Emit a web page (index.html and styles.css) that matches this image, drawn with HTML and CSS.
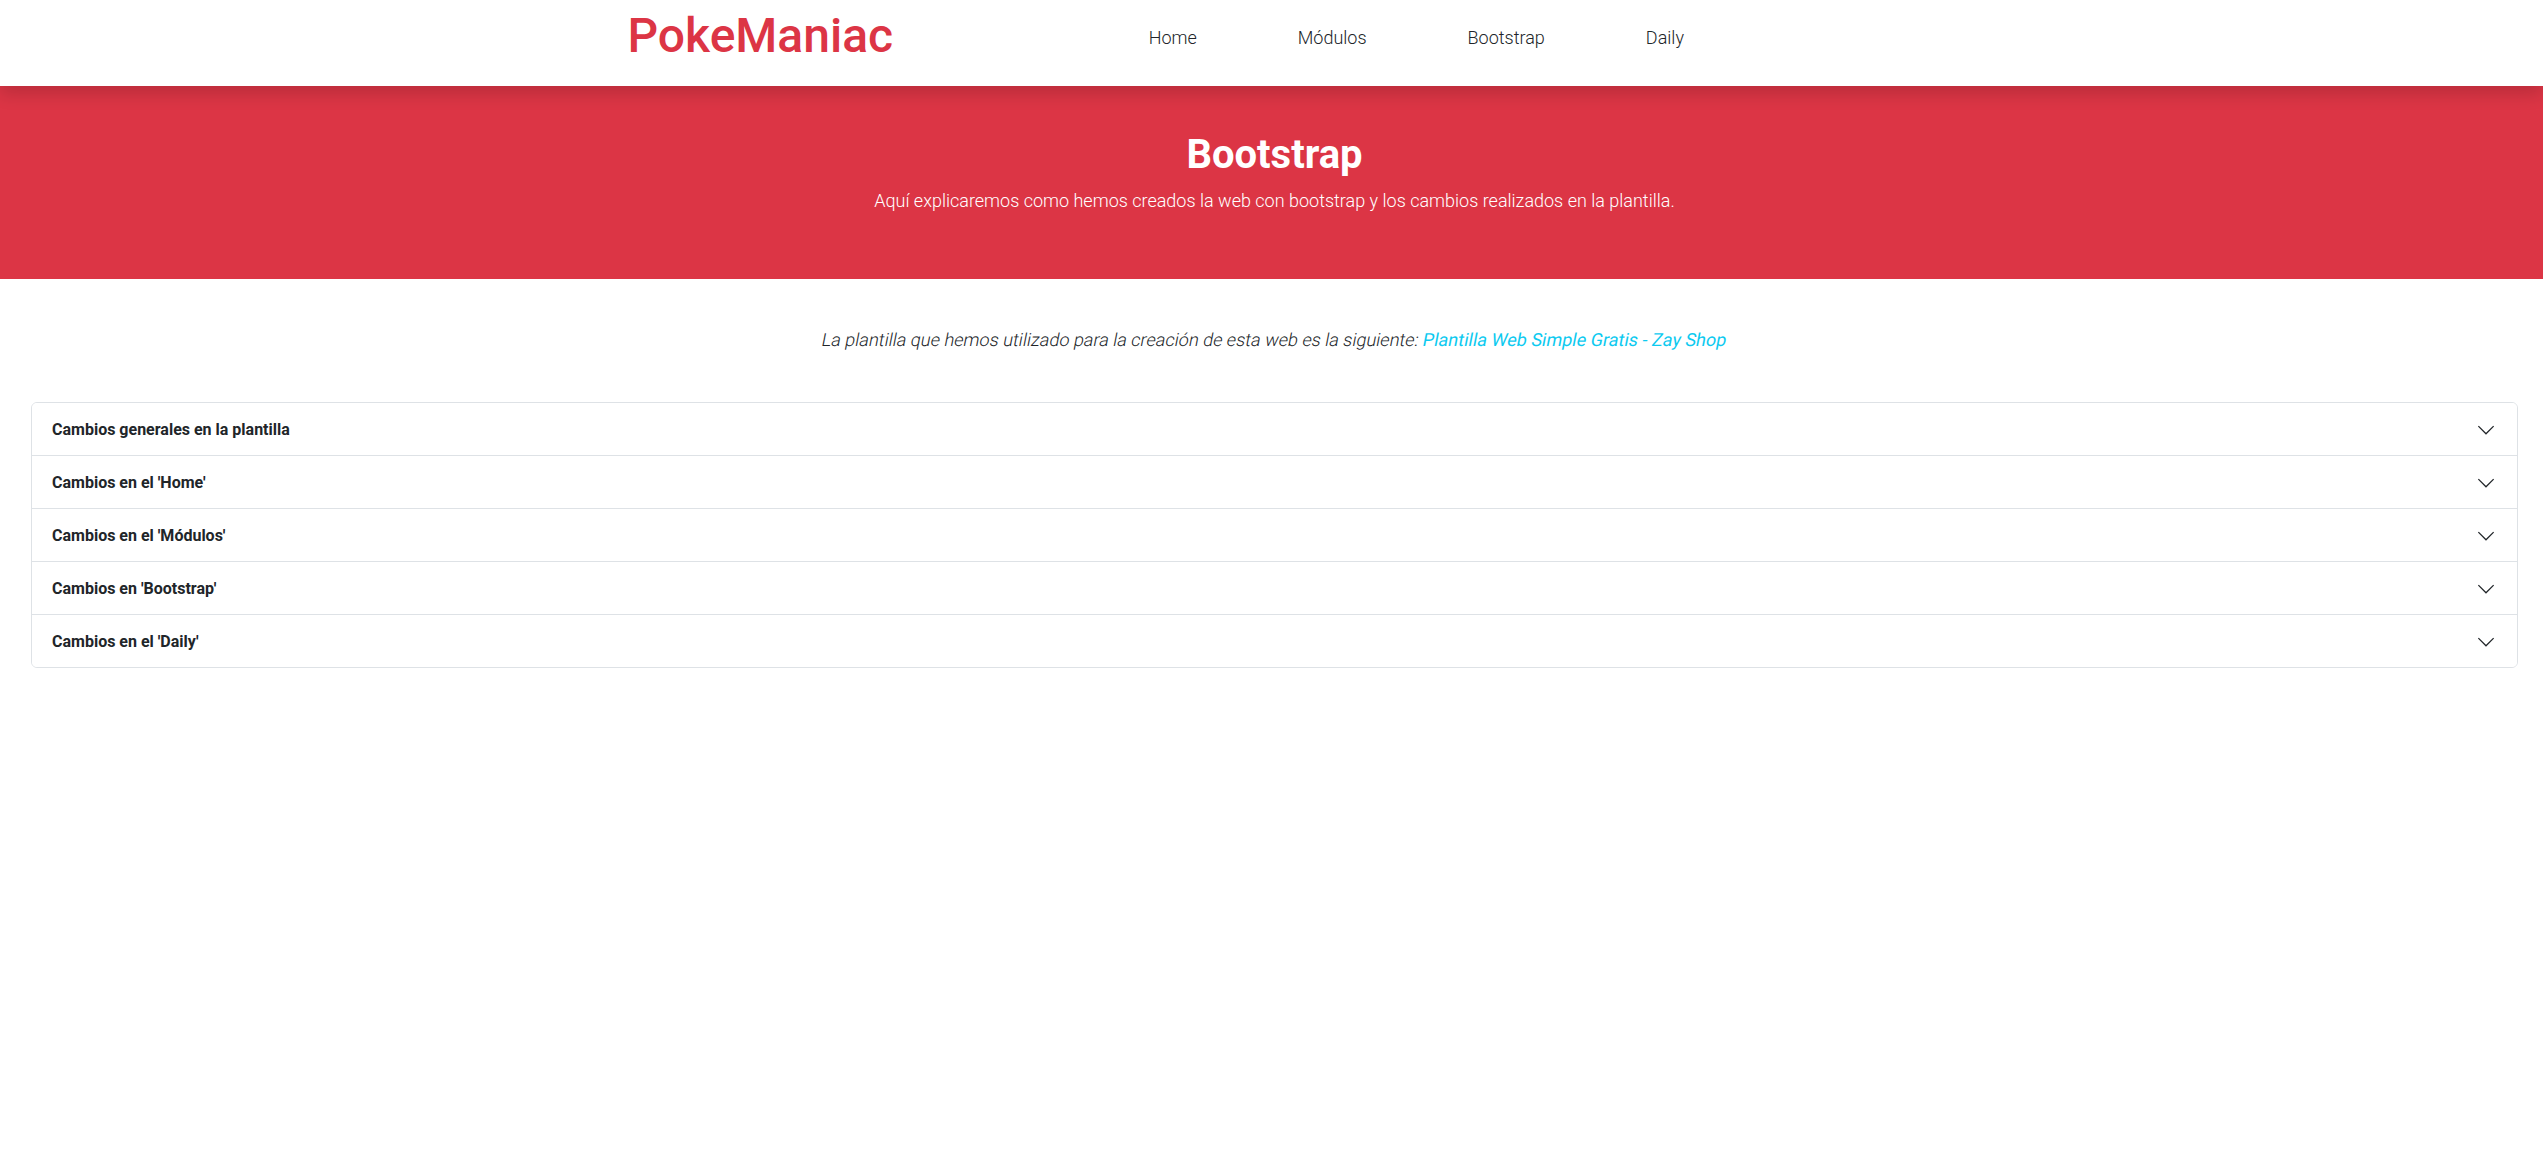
FILE: index.html
```html
<!DOCTYPE html>
<html lang="es">
<head>
<meta charset="utf-8">
<title>PokeManiac - Bootstrap</title>
<link rel="stylesheet" href="styles.css">
</head>
<body>
<header class="navbar">
  <div class="nav-container">
    <a class="logo" href="#">PokeManiac</a>
    <nav class="nav-links">
      <a href="#">Home</a>
      <a href="#">Módulos</a>
      <a href="#">Bootstrap</a>
      <a href="#">Daily</a>
    </nav>
  </div>
</header>

<section class="hero">
  <div class="hero-inner">
    <h1>Bootstrap</h1>
    <p>Aquí explicaremos como hemos creados la web con bootstrap y los cambios realizados en la plantilla.</p>
  </div>
</section>

<main class="content">
  <p class="intro"><span class="oblique">La plantilla que hemos utilizado para la creación de esta web es la siguiente: <a href="#">Plantilla Web Simple Gratis - Zay Shop</a></span></p>

  <div class="accordion">
    <div class="acc-item">
      <button class="acc-btn"><strong>Cambios generales en la plantilla</strong>
        <svg class="chev" viewBox="0 0 16 16"><path fill="none" stroke="#212529" stroke-width="1" d="M1.9 4.9 8 11l6.1-6.1"/></svg>
      </button>
    </div>
    <div class="acc-item">
      <button class="acc-btn"><strong>Cambios en el 'Home'</strong>
        <svg class="chev" viewBox="0 0 16 16"><path fill="none" stroke="#212529" stroke-width="1" d="M1.9 4.9 8 11l6.1-6.1"/></svg>
      </button>
    </div>
    <div class="acc-item">
      <button class="acc-btn"><strong>Cambios en el 'Módulos'</strong>
        <svg class="chev" viewBox="0 0 16 16"><path fill="none" stroke="#212529" stroke-width="1" d="M1.9 4.9 8 11l6.1-6.1"/></svg>
      </button>
    </div>
    <div class="acc-item">
      <button class="acc-btn"><strong>Cambios en 'Bootstrap'</strong>
        <svg class="chev" viewBox="0 0 16 16"><path fill="none" stroke="#212529" stroke-width="1" d="M1.9 4.9 8 11l6.1-6.1"/></svg>
      </button>
    </div>
    <div class="acc-item">
      <button class="acc-btn"><strong>Cambios en el 'Daily'</strong>
        <svg class="chev" viewBox="0 0 16 16"><path fill="none" stroke="#212529" stroke-width="1" d="M1.9 4.9 8 11l6.1-6.1"/></svg>
      </button>
    </div>
  </div>
</main>
</body>
</html>
```
FILE: styles.css
```css
* { box-sizing: border-box; }

html, body {
  margin: 0;
  padding: 0;
  background: #fff;
}

body {
  font-family: Roboto, "Liberation Sans", sans-serif;
  font-weight: 300;
  font-size: 18px;
  line-height: 1.5;
  color: #212529;
}

a { text-decoration: none; }

/* ---------- navbar ---------- */
.navbar {
  position: relative;
  z-index: 2;
  height: 86px;
  background: #fff;
  box-shadow: 0 0.5rem 1rem rgba(0, 0, 0, 0.15);
}

.nav-container {
  width: 1320px;
  margin: 0 auto;
  padding: 0 12px;
  display: flex;
  align-items: flex-start;
}

.logo {
  margin-top: 7px;
  margin-right: 16px;
  font-size: 48px;
  line-height: 58px;
  font-weight: 500;
  color: #dc3545;
  padding-left: 4px;
}

.nav-links {
  margin: 24px auto 0;
  padding-left: 4px;
  display: flex;
}

.nav-links a {
  display: block;
  padding: 0 50.5px;
  font-size: 18px;
  line-height: 27px;
  font-weight: 300;
  color: #212529;
}

/* ---------- hero ---------- */
.hero {
  background: #dc3545;
  color: #fff;
  padding: 45px 25px 49px 31px;
  text-align: center;
}

.hero h1 {
  margin: 0 0 8px;
  font-size: 40px;
  line-height: 48px;
  font-weight: 700;
}

.hero p {
  margin: 0 0 16px;
  font-size: 18px;
  line-height: 27px;
  font-weight: 300;
}

/* ---------- content ---------- */
.content {
  padding: 47px 25px 0 31px;
}

.intro {
  margin: 0 0 49px;
  text-align: center;
  font-weight: 300;
  font-size: 18px;
  line-height: 27px;
  color: #212529;
}

.oblique {
  display: inline-block;
  transform: skewX(-11deg);
}

.intro a {
  color: #0dcaf0;
  font-weight: 400;
}

.accordion {
  border: 1px solid #dee2e6;
  border-radius: 6px;
  overflow: hidden;
}

.acc-item + .acc-item {
  border-top: 1px solid #dee2e6;
}

.acc-btn {
  width: 100%;
  display: flex;
  align-items: center;
  justify-content: space-between;
  padding: 17px 21px 15px 20px;
  border: 0;
  background: #fff;
  font-family: Roboto, "Liberation Sans", sans-serif;
  font-size: 16px;
  line-height: 20px;
  color: #212529;
  text-align: left;
  cursor: pointer;
}

.acc-btn strong {
  font-weight: 700;
}

.chev {
  width: 20px;
  height: 20px;
  flex-shrink: 0;
}
```
